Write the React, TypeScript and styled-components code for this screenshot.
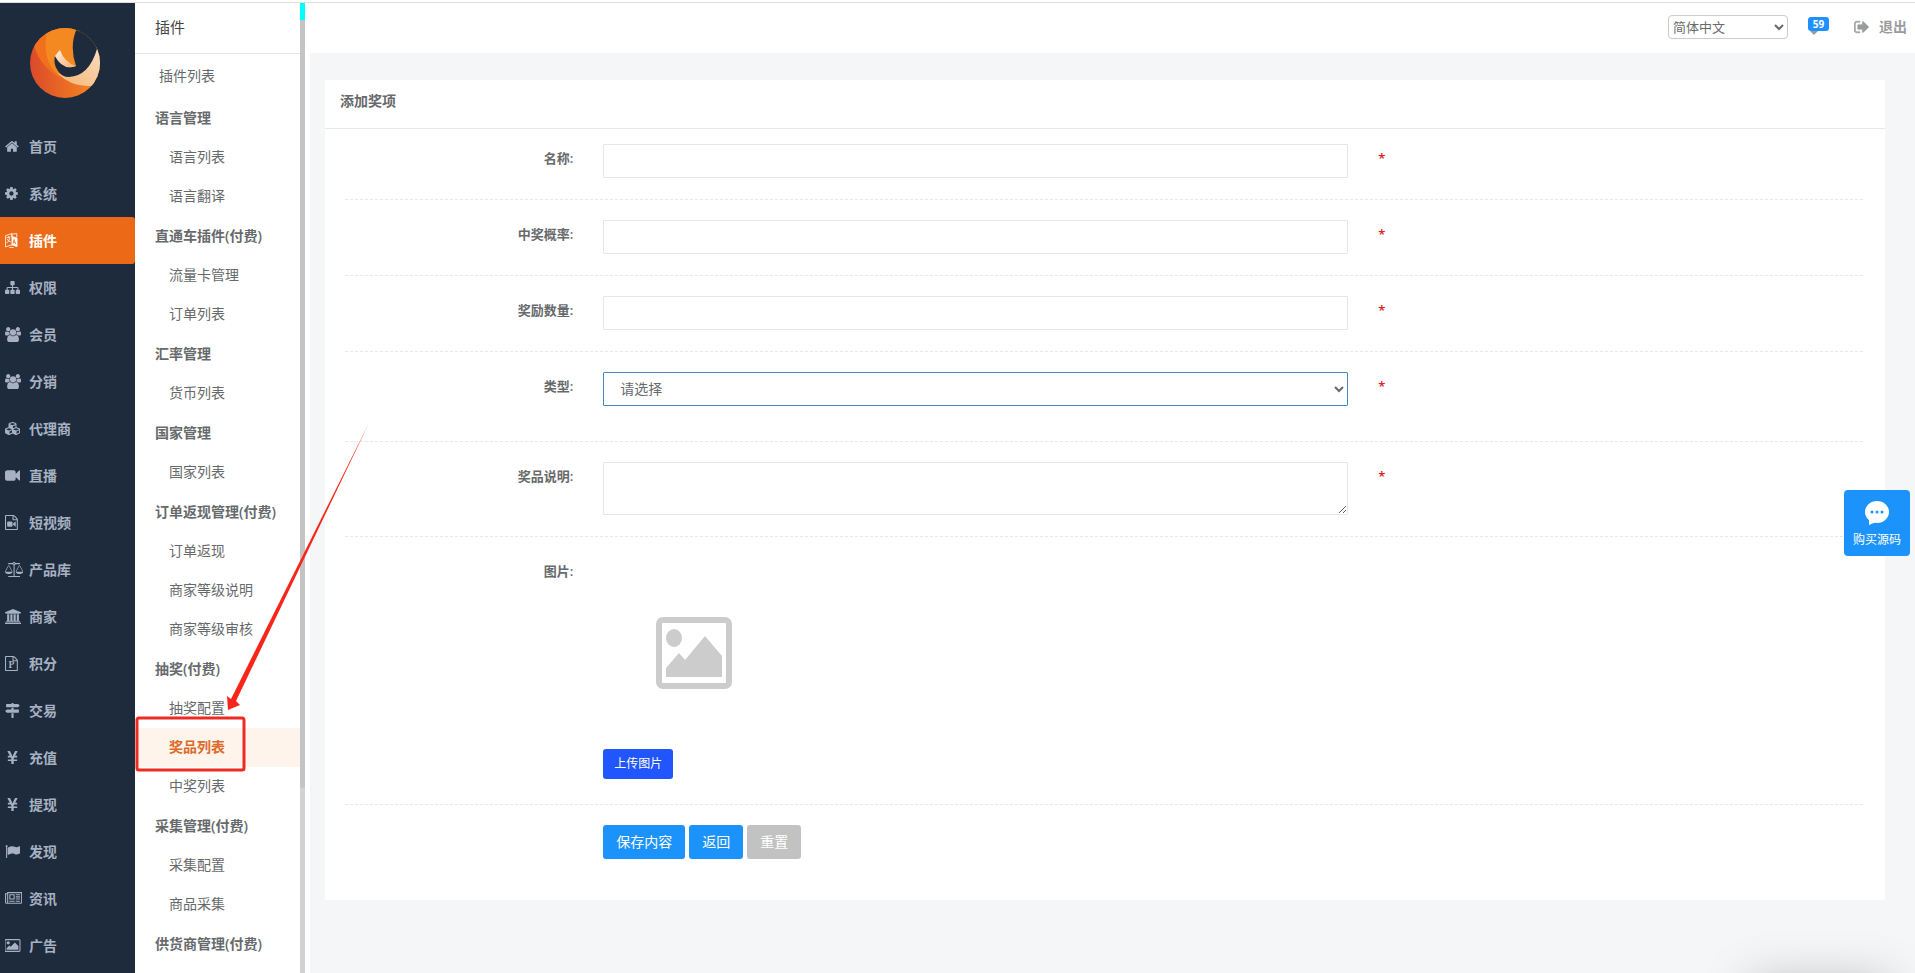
import React from "react";
import styled, { createGlobalStyle } from "styled-components";
import { FaCubes, FaYenSign } from "react-icons/fa";

const GlobalStyle = createGlobalStyle`
  *, *::before, *::after { box-sizing: border-box; }
  body {
    margin: 0;
    background: #f5f6f8;
    color: #676a6c;
    font-family: "Open Sans", "Noto Sans CJK SC", sans-serif;
    font-size: 14px;
    line-height: 20px;
  }
  button, input, select, textarea { font: inherit; color: inherit; }
  ul { list-style: none; margin: 0; padding: 0; }
  h1, h2, h3 { margin: 0; font-size: inherit; }
  a { color: inherit; text-decoration: none; }
`;

const Shell = styled.div`
  position: relative;
  display: flex;
  height: 100vh;
  overflow: hidden;
  border-top: 1px solid #dedede;
`;

const Page = styled.div`
  padding-top: 2px;
  height: 100vh;
  overflow: hidden;
  background: #fff;
`;

const SideBar = styled.nav`
  flex: 0 0 135px;
  overflow: hidden;
  background: #1e2b3c;
  color: #a7b1c2;
`;

const Brand = styled.a`
  display: flex;
  justify-content: center;
  height: 120px;
  padding: 25px 5px 0 0;
`;

const NavLink = styled.a<{ $active?: boolean }>`
  display: flex;
  align-items: center;
  height: 47px;
  padding-left: 5px;
  border-radius: 0 3px 3px 0;
  font-weight: 600;
  color: ${(p) => (p.$active ? "#fff" : "#a7b1c2")};
  background: ${(p) => (p.$active ? "#ec6a17" : "transparent")};
`;

const NavIcon = styled.span`
  display: flex;
  flex: 0 0 24px;
  svg { height: 15px; width: auto; fill: currentColor; }
`;

const SubMenu = styled.nav`
  flex: 0 0 165px;
  overflow: hidden;
  background: #fff;
`;

const SubTitle = styled.h2`
  height: 51px;
  padding: 14px 20px 0;
  border-bottom: 1px solid #e5e5e5;
  font-size: 15px;
  font-weight: 400;
  color: #444;
`;

const SubTop = styled.a`
  display: flex;
  align-items: center;
  height: 44px;
  padding-left: 24px;
`;

const SubHeading = styled.h3`
  display: flex;
  align-items: center;
  height: 40px;
  padding-left: 20px;
  font-weight: 600;
`;

const SubLink = styled.a<{ $active?: boolean }>`
  display: flex;
  align-items: center;
  height: 39px;
  padding: 0 0 2px 34px;
  font-weight: ${(p) => (p.$active ? 600 : 400)};
  color: ${(p) => (p.$active ? "#dd6b2b" : "inherit")};
  background: ${(p) => (p.$active ? "#fff4eb" : "transparent")};
`;

const Rail = styled.div`
  display: flex;
  flex-direction: column;
  flex: 0 0 5px;
  background: #d2d2d2;
  &::before { content: ""; flex: 0 0 17px; background: #00ffff; }
  &::after { content: ""; flex: 0 0 79%; background: #c4c4c4; border-radius: 0 0 3px 3px; }
`;

const Main = styled.main`
  display: flex;
  flex: 1;
  flex-direction: column;
  min-width: 0;
  border-left: 5px solid #fff;
  background: #f5f6f8;
`;

const TopBar = styled.header`
  display: flex;
  align-items: center;
  justify-content: flex-end;
  height: 50px;
  padding: 0 8px 2px 0;
  background: #fff;
`;

const LanguageSelect = styled.select`
  width: 120px;
  height: 24px;
  margin-right: 20px;
  padding: 0;
  border: 1px solid #ccc;
  border-radius: 4px;
  background: #fff;
  font-size: 13px;
`;

const MessageLink = styled.a`
  position: relative;
  width: 21px;
  height: 20px;
  margin-right: 25px;
  &::after {
    content: "";
    position: absolute;
    left: 2px;
    top: 14px;
    border: 4px solid transparent;
    border-top-color: #999c9e;
  }
`;

const Badge = styled.span`
  display: block;
  height: 14px;
  border-radius: 3px;
  background: #1e90ff;
  color: #fff;
  font-size: 10px;
  font-weight: 700;
  line-height: 14px;
  text-align: center;
`;

const LogoutLink = styled.a`
  display: flex;
  align-items: center;
  gap: 10px;
  color: #999c9e;
  font-weight: 600;
  svg { width: 15px; height: 14px; fill: currentColor; }
`;

const Card = styled.section`
  margin: 27px 30px 0 15px;
  padding-bottom: 41px;
  background: #fff;
`;

const CardTitle = styled.h1`
  height: 49px;
  padding: 11px 15px 0;
  border-bottom: 1px solid #e7eaec;
  font-weight: 600;
`;

const Form = styled.form`
  display: flex;
  flex-direction: column;
  gap: 20px;
  padding: 15px 20px 0;
`;

const FormRow = styled.div<{ $spaced?: boolean }>`
  padding-bottom: ${(p) => (p.$spaced ? 36 : 22)}px;
  background: repeating-linear-gradient(90deg, #e7e7e7 0 3px, transparent 3px 5px) bottom / 100% 1px no-repeat;
`;

const Columns = styled.div`
  display: grid;
  grid-template-columns: 2fr 6fr 4fr;
  margin: 0 -15px;
`;

const Cell = styled.div`
  grid-column: 2;
  padding: 0 15px;
`;

const Label = styled.label`
  padding: 4px 15px 0;
  text-align: right;
  font-size: 13px;
  font-weight: 600;
`;

const TextInput = styled.input`
  display: block;
  width: 100%;
  height: 34px;
  padding: 6px 12px;
  border: 1px solid #e5e6e7;
  border-radius: 1px;
  background: #fff;
`;

const TypeSelect = styled.select`
  display: block;
  width: 100%;
  height: 34px;
  padding: 4px 12px 6px;
  border: 1px solid #4285bf;
  border-radius: 1px;
  background: #fff;
  outline: none;
`;

const NoteArea = styled.textarea`
  display: block;
  width: 100%;
  height: 53px;
  padding: 6px 12px;
  border: 1px solid #e5e6e7;
  border-radius: 1px;
  resize: vertical;
`;

const Required = styled.span`
  padding: 4px 15px 0;
  color: #e02020;
  font-size: 13px;
  font-weight: 600;
`;

const Upload = styled.div`
  display: flex;
  flex-direction: column;
  align-items: flex-start;
  gap: 60px;
  padding-top: 60px;
  height: 226px;
  svg { width: 76px; height: 72px; margin-left: 53px; }
`;

const UploadButton = styled.button`
  width: 70px;
  height: 30px;
  padding: 0;
  border: 0;
  border-radius: 3px;
  background: #2156ff;
  color: #fff;
  font-size: 12px;
`;

const Actions = styled.div`
  display: flex;
  gap: 4px;
`;

const ActionButton = styled.button<{ $muted?: boolean }>`
  height: 34px;
  padding: 0 13px;
  border: 0;
  border-radius: 3px;
  background: ${(p) => (p.$muted ? "#c2c2c2" : "#1c93fb")};
  color: #fff;
`;

const BuyButton = styled.a`
  position: fixed;
  right: 5px;
  top: 490px;
  display: flex;
  flex-direction: column;
  align-items: center;
  gap: 4px;
  width: 66px;
  height: 66px;
  padding-top: 10px;
  border-radius: 4px;
  background: #1c93fb;
  color: #fff;
  font-size: 12px;
  line-height: 20px;
  svg { width: 26px; height: 26px; }
`;

const CornerShadow = styled.div`
  position: fixed;
  right: 25px;
  bottom: -60px;
  width: 140px;
  height: 50px;
  box-shadow: 0 0 50px 0 rgba(0, 0, 0, 0.25);
`;

const Annotation = styled.svg`
  position: absolute;
  left: 130px;
  top: 417px;
  width: 250px;
  height: 360px;
  pointer-events: none;
`;

type IconProps = { d: string; w?: number; children?: React.ReactNode };
const Glyph = ({ d, w = 1792, children }: IconProps) => (
  <svg viewBox={`0 0 ${w} 1792`} aria-hidden="true">
    <path d={d} />
    {children}
  </svg>
);

const FILE =
  "M1596 380q28 28 48 76t20 88v1152q0 40-28 68t-68 28h-1344q-40 0-68-28t-28-68v-1600q0-40 28-68t68-28h896q40 0 88 20t76 48zm-444-244v376h376q-10-29-22-41l-313-313q-12-12-41-22zm384 1528v-1024h-416q-40 0-68-28t-28-68v-416h-768v1536h1280z";
const USERS =
  "M593 896q-162 5-265 128h-134q-82 0-138-40.5t-56-118.5q0-353 124-353 6 0 43.5 21t97.5 42.5 119 21.5q67 0 133-23-5 37-5 66 0 139 81 256zm1071 637q0 120-73 189.5t-194 69.5h-874q-121 0-194-69.5t-73-189.5q0-53 3.5-103.5t14-109 26.5-108.5 43-97.5 62-81 85.5-53.5 111.5-20q10 0 43 21.5t73 48 107 48 135 21.5 135-21.5 107-48 73-48 43-21.5q61 0 111.5 20t85.5 53.5 62 81 43 97.5 26.5 108.5 14 109 3.5 103.5zm-1024-1277q0 106-75 181t-181 75-181-75-75-181 75-181 181-75 181 75 75 181zm704 384q0 159-112.5 271.5t-271.5 112.5-271.5-112.5-112.5-271.5 112.5-271.5 271.5-112.5 271.5 112.5 112.5 271.5zm576 225q0 78-56 118.5t-138 40.5h-134q-103-123-265-128 81-117 81-256 0-29-5-66 66 23 133 23 59 0 119-21.5t97.5-42.5 43.5-21q124 0 124 353zm-128-609q0 106-75 181t-181 75-181-75-75-181 75-181 181-75 181 75 75 181z";

const HomeIcon = () => (
  <svg viewBox="64 0 1664 1792" aria-hidden="true">
    <path d="M1472 992v480q0 26-19 45t-45 19h-384v-384h-256v384h-384q-26 0-45-19t-19-45v-480q0-1 .5-3t.5-3l575-474 575 474q1 2 1 6zm223-69l-62 74q-8 9-21 11h-3q-13 0-21-7l-692-577-692 577q-12 8-24 7-13-2-21-11l-62-74q-8-10-7-23.500t11-21.500l719-599q32-26 76-26t76 26l244 204v-195q0-14 9-23t23-9h192q14 0 23 9t9 23v408l219 182q10 8 11 21.500t-7 23.500z" />
  </svg>
);
const CogIcon = () => (
  <svg viewBox="128 0 1536 1792" aria-hidden="true">
    <path d="M1152 896q0-106-75-181t-181-75-181 75-75 181 75 181 181 75 181-75 75-181zm512-109v222q0 12-8 23t-20 13l-185 28q-19 54-39 91 35 50 107 138 10 12 10 25t-9 23q-27 37-99 108t-94 71q-12 0-26-9l-138-108q-44 23-91 38-16 136-29 186-7 28-36 28h-222q-14 0-24.500-8.500t-11.500-21.500l-28-184q-49-16-90-37l-141 107q-10 9-25 9-14 0-25-11-126-114-165-168-7-10-7-23 0-12 8-23 15-21 51-66.500t54-70.500q-27-50-41-99l-183-27q-13-2-21-12.500t-8-23.500v-222q0-12 8-23t19-13l186-28q14-46 39-92-40-57-107-138-10-12-10-24 0-10 9-23 26-36 98.500-107.500t94.500-71.500q13 0 26 10l138 107q44-23 91-38 16-136 29-186 7-28 36-28h222q14 0 24.500 8.500t11.500 21.500l28 184q49 16 90 37l142-107q9-9 24-9 13 0 25 10 129 119 165 170 7 8 7 22 0 12-8 23-15 21-51 66.500t-54 70.500q26 50 41 98l183 28q13 2 21 12.500t8 23.500z" />
  </svg>
);
const PluginIcon = () => (
  <svg viewBox="0 0 24 28" aria-hidden="true">
    <path d="M1 5 L13 1 V22 L1 26 Z M11 3 L14 5 M11 6 L22 9 V25 L12 22" fill="none" stroke="currentColor" strokeWidth="1.500" />
    <path d="M13 7 L23 10 V26 L13 22 Z" />
    <path d="M3 9 L10 7 M6 6 L7 9 M9 8 Q8 16 3 19 M4 11 Q6 16 11 17" fill="none" stroke="currentColor" strokeWidth="1.500" />
    <path d="M15 20 L17 12 L20 21 M16 17 L19 18" fill="none" stroke="#ec6a17" strokeWidth="1.500" />
    <path d="M13 2 L22 1 V8 M8 27 H16" fill="none" stroke="currentColor" strokeWidth="1.500" />
  </svg>
);
const SitemapIcon = () => (
  <Glyph d="M1792 1248v320q0 40-28 68t-68 28h-320q-40 0-68-28t-28-68v-320q0-40 28-68t68-28h96v-192h-512v192h96q40 0 68 28t28 68v320q0 40-28 68t-68 28h-320q-40 0-68-28t-28-68v-320q0-40 28-68t68-28h96v-192h-512v192h96q40 0 68 28t28 68v320q0 40-28 68t-68 28h-320q-40 0-68-28t-28-68v-320q0-40 28-68t68-28h96v-192q0-52 38-90t90-38h512v-192h-96q-40 0-68-28t-28-68v-320q0-40 28-68t68-28h320q40 0 68 28t28 68v320q0 40-28 68t-68 28h-96v192h512q52 0 90 38t38 90v192h96q40 0 68 28t28 68z" />
);
const UsersIcon = () => <Glyph w={1920} d={USERS} />;
const VideoIcon = () => (
  <Glyph d="M1792 352v1088q0 42-39 59-13 5-25 5-27 0-45-19l-403-403v166q0 119-84.500 203.500t-203.500 84.500h-704q-119 0-203.500-84.500t-84.500-203.500v-704q0-119 84.500-203.500t203.500-84.500h704q119 0 203.500 84.500t84.500 203.500v165l403-402q18-19 45-19 12 0 25 5 39 17 39 59z" />
);
const FileSvg = ({ children }: { children: React.ReactNode }) => (
  <svg viewBox="128 0 1536 1792" aria-hidden="true">
    <path d={FILE} />
    {children}
  </svg>
);
const FileVideoIcon = () => (
  <FileSvg>
    <path d="M512 768h384q52 0 90 38t38 90v384q0 52-38 90t-90 38h-384q-52 0-90-38t-38-90v-384q0-52 38-90t90-38zM1376 770q32 2 32 30v576q0 28-32 30l-312-266v-104z" />
  </FileSvg>
);
const FilePointsIcon = () => (
  <FileSvg>
    <text x="896" y="1480" textAnchor="middle" fontFamily="Liberation Serif, serif" fontSize="1150" fontWeight="700">P</text>
  </FileSvg>
);
const ScaleIcon = () => (
  <Glyph
    w={2176}
    d="M1728 448l-384 704h768zm-1280 0l-384 704h768zm821-192q-14 40-45.500 71.500t-71.500 45.500v1291h608q14 0 23 9t9 23v64q0 14-9 23t-23 9h-1344q-14 0-23-9t-9-23v-64q0-14 9-23t23-9h608v-1291q-40-14-71.500-45.500t-45.500-71.500h-491q-14 0-23-9t-9-23v-64q0-14 9-23t23-9h491q21-57 70-92.500t111-35.500 111 35.500 70 92.500h491q14 0 23 9t9 23v64q0 14-9 23t-23 9h-491zm-181 16q33 0 56.500-23.500t23.500-56.500-23.500-56.500-56.500-23.500-56.500 23.500-23.500 56.500 23.500 56.500 56.500 23.500zm1088 880q0 73-46.500 131t-117.500 91-144.500 49.500-139.500 16.500-139.500-16.500-144.500-49.500-117.500-91-46.500-131q0-11 35-81t92-174.500 107-195.500 102-184 56-100q18-33 56-33t56 33q4 7 56 100t102 184 107 195.500 92 174.500 35 81zm-1280 0q0 73-46.500 131t-117.500 91-144.500 49.500-139.500 16.500-139.500-16.500-144.500-49.500-117.500-91-46.500-131q0-11 35-81t92-174.500 107-195.500 102-184 56-100q18-33 56-33t56 33q4 7 56 100t102 184 107 195.500 92 174.500 35 81z"
  />
);
const BankIcon = () => (
  <Glyph
    w={1920}
    d="M960 0l960 384v128h-128q0 26-20.500 45t-48.500 19h-1526q-28 0-48.500-19t-20.500-45h-128v-128zm-704 640h256v768h128v-768h256v768h128v-768h256v768h128v-768h256v768h59q28 0 48.500 19t20.500 45v64h-1664v-64q0-26 20.500-45t48.500-19h59v-768zm1595 960q28 0 48.500 19t20.500 45v128h-1920v-128q0-26 20.500-45t48.500-19h1782z"
  />
);
const SignsIcon = () => (
  <Glyph d="M1745 297q10 10 10 23t-10 23l-141 141q-28 28-68 28h-1344q-26 0-45-19t-19-45v-256q0-26 19-45t45-19h576v-64q0-26 19-45t45-19h128q26 0 45 19t19 45v64h512q40 0 68 28zm-977 919h256v512q0 26-19 45t-45 19h-128q-26 0-45-19t-19-45v-512zm832-448q26 0 45 19t19 45v256q0 26-19 45t-45 19h-1344q-40 0-68-28l-141-141q-10-10-10-23t10-23l141-141q28-28 68-28h512v-192h256v192h576z" />
);
const FlagIcon = () => (
  <Glyph d="M320 256q0 72-64 110v1266q0 13-9.500 22.500t-22.500 9.500h-64q-13 0-22.500-9.500t-9.500-22.500v-1266q-64-38-64-110 0-53 37.500-90.500t90.500-37.500 90.500 37.500 37.500 90.500zm1472 64v763q0 25-12.500 38.500t-39.500 27.500q-215 116-369 116-61 0-123.500-22t-108.500-48-115.500-48-142.500-22q-192 0-464 146-17 9-33 9-26 0-45-19t-19-45v-742q0-32 31-55 21-14 79-43 236-120 421-120 107 0 200 29t219 88q38 19 88 19 54 0 117.500-21t110-47 88-47 54.500-21q26 0 45 19t19 45z" />
);
const NewsIcon = () => (
  <Glyph
    w={2048}
    d="M1024 512h-384v384h384v-384zm128 640v128h-640v-128h640zm0-768v640h-640v-640h640zm640 768v128h-512v-128h512zm0-256v128h-512v-128h512zm0-256v128h-512v-128h512zm0-256v128h-512v-128h512zm-1536 960v-960h-128v960q0 26 19 45t45 19 45-19 19-45zm1664 0v-1088h-1536v1088q0 33-11 64h1483q26 0 45-19t19-45zm128-1216v1216q0 80-56 136t-136 56h-1664q-80 0-136-56t-56-136v-1088h256v-128h1792z"
  />
);
const PictureIcon = () => (
  <Glyph
    w={1920}
    d="M576 576q0 80-56 136t-136 56-136-56-56-136 56-136 136-56 136 56 56 136zm1024 384v448h-1408v-192l320-320 160 160 512-512zm96-704h-1600q-13 0-22.500 9.500t-9.500 22.500v1216q0 13 9.500 22.500t22.500 9.500h1600q13 0 22.500-9.500t9.500-22.500v-1216q0-13-9.500-22.500t-22.500-9.500zm160 32v1216q0 66-47 113t-113 47h-1600q-66 0-113-47t-47-113v-1216q0-66 47-113t113-47h1600q66 0 113 47t47 113z"
  />
);
const LogoutIcon = () => (
  <svg viewBox="64 128 1600 1536" aria-hidden="true">
    <path
      stroke="currentColor"
      strokeWidth="60"
      d="M704 1440q0 4 1 20t.5 26.500-3 23.500-10 19.500-20.500 6.500h-320q-119 0-203.500-84.500t-84.500-203.500v-704q0-119 84.500-203.500t203.500-84.500h320q13 0 22.500 9.500t9.500 22.500q0 4 1 20t.5 26.500-3 23.500-10 19.500-20.500 6.500h-320q-66 0-113 47t-47 113v704q0 66 47 113t113 47h312l11.500 1 11.500 3 8 5.500 7 9 2 13.500zm928-544q0 26-19 45l-544 544q-19 19-45 19t-45-19-19-45v-288h-448q-26 0-45-19t-19-45v-384q0-26 19-45t45-19h448v-288q0-26 19-45t45-19 45 19l544 544q19 19 19 45z"
    />
  </svg>
);

const Logo = () => (
  <svg width="70" height="70" viewBox="0 0 70 70" aria-label="首页">
    <defs>
      <clipPath id="disc"><circle cx="35" cy="35" r="35" /></clipPath>
      <linearGradient id="ring" x1="0" y1="0" x2="1" y2="0">
        <stop offset="0" stopColor="#dc4a2a" />
        <stop offset="1" stopColor="#f68c20" />
      </linearGradient>
      <linearGradient id="tail" x1="1" y1="0" x2="0" y2="1">
        <stop offset="0" stopColor="#fae0c8" />
        <stop offset="1" stopColor="#f7b470" />
      </linearGradient>
      <linearGradient id="leaf" x1="0" y1="0" x2="1" y2="1">
        <stop offset="0" stopColor="#fdf0e2" />
        <stop offset="1" stopColor="#f6b070" />
      </linearGradient>
    </defs>
    <g clipPath="url(#disc)">
      <rect width="70" height="70" fill="url(#ring)" />
      <path d="M4 18 Q10 38 30 50 L50 38 V0 H4 Z" fill="#f26f1c" />
      <path d="M17 2 Q11 32 28 47 L50 38 V0 H17 Z" fill="#f48821" />
      <path d="M72 12 L72 58 H60 Q42 59 28 46 L50 40 Z" fill="url(#tail)" />
      <path d="M47 0 Q39 18 46 38 Q33 43 25 28 Q23 36 28 43 Q32 49 39 49 Q59 48 67 21 L72 10 V-2 Z" fill="#1e2b3c" />
      <path d="M30 22 Q34 34 46 38 Q33 43 25 28 Q27 25 30 22 Z" fill="url(#leaf)" />
    </g>
  </svg>
);

const navItems: [string, React.ReactNode][] = [
  ["首页", <HomeIcon />],
  ["系统", <CogIcon />],
  ["插件", <PluginIcon />],
  ["权限", <SitemapIcon />],
  ["会员", <UsersIcon />],
  ["分销", <UsersIcon />],
  ["代理商", <FaCubes />],
  ["直播", <VideoIcon />],
  ["短视频", <FileVideoIcon />],
  ["产品库", <ScaleIcon />],
  ["商家", <BankIcon />],
  ["积分", <FilePointsIcon />],
  ["交易", <SignsIcon />],
  ["充值", <FaYenSign />],
  ["提现", <FaYenSign />],
  ["发现", <FlagIcon />],
  ["资讯", <NewsIcon />],
  ["广告", <PictureIcon />],
];

const groups: [string, string[]][] = [
  ["语言管理", ["语言列表", "语言翻译"]],
  ["直通车插件(付费)", ["流量卡管理", "订单列表"]],
  ["汇率管理", ["货币列表"]],
  ["国家管理", ["国家列表"]],
  ["订单返现管理(付费)", ["订单返现", "商家等级说明", "商家等级审核"]],
  ["抽奖(付费)", ["抽奖配置", "奖品列表", "中奖列表"]],
  ["采集管理(付费)", ["采集配置", "商品采集"]],
  ["供货商管理(付费)", []],
];

type FieldProps = { id: string; label: string; spaced?: boolean; required?: boolean; children: React.ReactNode };
const Field = ({ id, label, spaced, required = true, children }: FieldProps) => (
  <FormRow $spaced={spaced}>
    <Columns>
      <Label htmlFor={id}>{label}:</Label>
      <Cell>{children}</Cell>
      {required && <Required>*</Required>}
    </Columns>
  </FormRow>
);

export default function App() {
  return (
    <Page>
      <GlobalStyle />
      <Shell>
        <SideBar>
          <Brand href="#"><Logo /></Brand>
          <ul>
            {navItems.map(([name, icon]) => (
              <li key={name}>
                <NavLink href="#" $active={name === "插件"}>
                  <NavIcon>{icon}</NavIcon>
                  {name}
                </NavLink>
              </li>
            ))}
          </ul>
        </SideBar>
        <SubMenu>
          <SubTitle>插件</SubTitle>
          <SubTop href="#">插件列表</SubTop>
          {groups.map(([title, links]) => (
            <section key={title}>
              <SubHeading>{title}</SubHeading>
              <ul>
                {links.map((link) => (
                  <li key={link}>
                    <SubLink href="#" $active={link === "奖品列表"}>{link}</SubLink>
                  </li>
                ))}
              </ul>
            </section>
          ))}
        </SubMenu>
        <Rail />
        <Main>
          <TopBar>
            <LanguageSelect aria-label="语言" defaultValue="zh">
              <option value="zh">简体中文</option>
            </LanguageSelect>
            <MessageLink href="#"><Badge>59</Badge></MessageLink>
            <LogoutLink href="#"><LogoutIcon />退出</LogoutLink>
          </TopBar>
          <Card>
            <CardTitle>添加奖项</CardTitle>
            <Form>
              <Field id="name" label="名称"><TextInput id="name" /></Field>
              <Field id="rate" label="中奖概率"><TextInput id="rate" /></Field>
              <Field id="amount" label="奖励数量"><TextInput id="amount" /></Field>
              <Field id="type" label="类型" spaced>
                <TypeSelect id="type"><option>请选择</option></TypeSelect>
              </Field>
              <Field id="note" label="奖品说明"><NoteArea id="note" /></Field>
              <Field id="image" label="图片" required={false}>
                <Upload>
                  <svg viewBox="0 0 76 72" aria-hidden="true">
                    <rect x="3" y="3" width="70" height="66" rx="4" fill="none" stroke="#ccc" strokeWidth="6" />
                    <ellipse cx="18" cy="21" rx="8" ry="9" fill="#ccc" />
                    <path d="M10 60 V51 L23 36 L29 43 L49 19 L66 39 V60 Z" fill="#ccc" />
                  </svg>
                  <UploadButton id="image" type="button">上传图片</UploadButton>
                </Upload>
              </Field>
              <Columns>
                <Cell>
                  <Actions>
                    <ActionButton type="button">保存内容</ActionButton>
                    <ActionButton type="button">返回</ActionButton>
                    <ActionButton type="reset" $muted>重置</ActionButton>
                  </Actions>
                </Cell>
              </Columns>
            </Form>
          </Card>
        </Main>
        <Annotation viewBox="0 0 250 360" aria-hidden="true">
          <path d="M239 3 L106 281 L110 285 L98 290 L97 276 L101 279 Z" fill="#f8251a" />
          <rect x="7" y="298" width="107" height="52" rx="2" fill="none" stroke="#ee2a22" strokeWidth="3" />
        </Annotation>
      </Shell>
      <BuyButton href="#">
        <svg viewBox="0 0 26 26" aria-hidden="true">
          <ellipse cx="13" cy="12" rx="12" ry="11" fill="#fff" />
          <path d="M5 18 L5 25 L12 22 Z" fill="#fff" />
          <g fill="#1c93fb"><circle cx="8" cy="12" r="1.500" /><circle cx="13" cy="12" r="1.500" /><circle cx="18" cy="12" r="1.500" /></g>
        </svg>
        购买源码
      </BuyButton>
      <CornerShadow />
    </Page>
  );
}
